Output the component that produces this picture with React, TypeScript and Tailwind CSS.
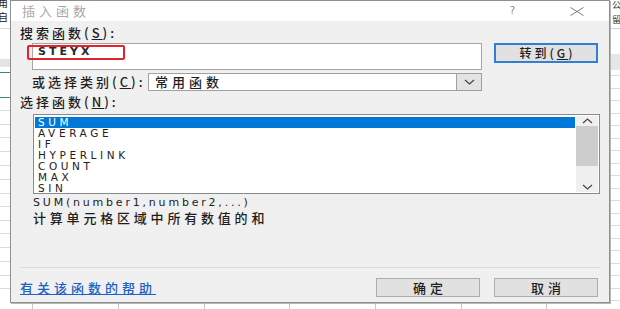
import React from "react";

const FUNCS = ["SUM", "AVERAGE", "IF", "HYPERLINK", "COUNT", "MAX", "SIN"];

function SheetBackdrop() {
  const leftRows = [110, 124, 137, 151, 165, 179, 193, 206, 220, 233, 247, 261, 275, 288];
  const rightRows = [75, 88, 100, 113, 125, 138, 150, 163, 175, 188, 200, 213, 225, 238, 250, 263, 275, 288, 300];
  const ticks = [32, 118, 204, 289, 375, 461, 546];
  return (
    <svg className="absolute inset-0" width="620" height="309" viewBox="0 0 620 309">
      {/* left edge of the sheet */}
      <text x="-2" y="7" fontSize="10" fill="#222" fontFamily="Noto Sans CJK SC, sans-serif">角</text>
      <text x="-2" y="21" fontSize="10" fill="#222" fontFamily="Noto Sans CJK SC, sans-serif">自</text>
      <line x1="0" y1="28.5" x2="12" y2="28.5" stroke="#d6d6d6" />
      <rect x="0" y="59" width="12" height="8" fill="#e4e4e4" />
      <line x1="0" y1="72.5" x2="12" y2="72.5" stroke="#3f8a5e" />
      <line x1="0" y1="97.5" x2="12" y2="97.5" stroke="#3f8a5e" />
      {leftRows.map((y) => (
        <line key={y} x1="0" y1={y + 0.5} x2="12" y2={y + 0.5} stroke="#dadada" />
      ))}
      {/* right edge of the sheet */}
      <text x="612" y="8" fontSize="9" fill="#333" fontFamily="Noto Sans CJK SC, sans-serif">公</text>
      <text x="612" y="23" fontSize="9" fill="#333" fontFamily="Noto Sans CJK SC, sans-serif">留</text>
      <line x1="610" y1="28.5" x2="620" y2="28.5" stroke="#cfcfcf" />
      <rect x="610" y="54" width="10" height="16" fill="#e6e6e6" />
      {rightRows.map((y) => (
        <line key={y} x1="610" y1={y + 0.5} x2="620" y2={y + 0.5} stroke="#dcdcdc" />
      ))}
      {/* bottom edge */}
      {ticks.map((x) => (
        <line key={x} x1={x + 0.5} y1="303" x2={x + 0.5} y2="309" stroke="#c4c4c4" />
      ))}
    </svg>
  );
}

function Chevron({ up = false }: { up?: boolean }) {
  return (
    <svg width="11" height="6" viewBox="0 0 11 6">
      <path
        d={up ? "M1 5 L5.5 1 L10 5" : "M1 1 L5.5 5 L10 1"}
        fill="none"
        stroke="#444"
        strokeWidth="1.2"
      />
    </svg>
  );
}

export default function App() {
  return (
    <div className="relative w-[620px] h-[309px] overflow-hidden bg-white">
      <SheetBackdrop />

      {/* Insert function dialog */}
      <div className="absolute left-[10px] top-0 w-[600px] h-[303px] border border-[#8f8f8f] bg-[#f0f0f0] flex flex-col shadow-[1px_1px_0_#b8b8b8] font-['Noto_Sans_CJK_SC',sans-serif] font-medium text-[#1e1e1e]">
        {/* title bar */}
        <div className="h-[20px] shrink-0 bg-white flex items-center">
          <span className="ml-[11px] text-[13px] leading-[14px] tracking-[4px] font-normal text-[#a8a8a8]">插入函数</span>
          <span className="ml-auto text-[10px] leading-none text-[#8a8a8a] font-['DejaVu_Sans',sans-serif]">?</span>
          <svg className="ml-[55px] mr-[25px]" width="14" height="9" viewBox="0 0 14 9">
            <path d="M0.5 0.5 L13.5 8.5 M13.5 0.5 L0.5 8.5" stroke="#6a6a6a" strokeWidth="0.9" fill="none" />
          </svg>
        </div>

        <div className="flex-1 flex flex-col pl-[9px] pr-[9px]">
          <div className="mt-[5px] h-[14px] text-[13px] leading-[14px] tracking-[3px]">
            搜索函数(<span className="underline">S</span>):
          </div>

          <div className="mt-[3px] flex items-start">
            <div className="relative ml-[12px] w-[450px] h-[27px] bg-white border border-[#a5a5a5]">
              <span className="block pl-[5px] pt-[1px] text-[11px] leading-[14px] tracking-[3px] font-['DejaVu_Sans',sans-serif] font-semibold text-[#2a2a2a]">
                STEYX
              </span>
              <div className="absolute left-[-6px] top-[1px] w-[98px] h-[15px] border-2 border-[#e4222b] rounded-[2px]" />
            </div>
            <button className="ml-[12px] w-[104px] h-[20px] bg-[#e1e1e1] border-2 border-[#2f7fd6] text-[12px] leading-[14px] tracking-[3px] pl-[3px]">
              转到(<span className="underline">G</span>)
            </button>
          </div>

          <div className="mt-[3px] h-[18px] flex items-center">
            <span className="ml-[12px] w-[116px] text-[13px] leading-[14px] tracking-[3px]">
              或选择类别(<span className="underline">C</span>):
            </span>
            <div className="w-[334px] h-[18px] bg-white border border-[#a0a0a0] flex items-center">
              <span className="pl-[6px] text-[13px] leading-[14px] tracking-[4px]">常用函数</span>
              <div className="ml-auto w-[25px] h-full bg-[#e3e3e3] border-l border-[#a0a0a0] flex items-center justify-center">
                <Chevron />
              </div>
            </div>
          </div>

          <div className="mt-[4px] h-[14px] text-[13px] leading-[14px] tracking-[3px]">
            选择函数(<span className="underline">N</span>):
          </div>

          {/* function list */}
          <div className="mt-[5px] ml-[13px] w-[567px] h-[80px] bg-white border border-[#8a8a8a] flex p-[1px]">
            <div className="flex-1 flex flex-col pt-[1px]">
              {FUNCS.map((name, i) => (
                <div
                  key={name}
                  className={
                    i === 0
                      ? "h-[11px] bg-[#0078d7] text-white pl-[3px] text-[10.5px] leading-[11px] tracking-[3.6px] font-['DejaVu_Sans',sans-serif]"
                      : "h-[11px] text-[#222] pl-[3px] text-[10.5px] leading-[11px] tracking-[3.6px] font-['DejaVu_Sans',sans-serif]"
                  }
                >
                  {name}
                </div>
              ))}
            </div>
            <div className="w-[22px] ml-[1px] bg-[#f0f0f0] flex flex-col items-center">
              <div className="h-[10px] flex items-center">
                <Chevron up />
              </div>
              <div className="w-full h-[40px] bg-[#cdcdcd]" />
              <div className="mt-auto h-[10px] flex items-center">
                <Chevron />
              </div>
            </div>
          </div>

          <div className="mt-[2px] ml-[13px] h-[13px] text-[11px] leading-[13px] tracking-[2.8px] font-['DejaVu_Sans','Noto_Sans_CJK_SC',sans-serif]">
            SUM(number1,number2,...)
          </div>
          <div className="mt-[2px] ml-[13px] h-[14px] text-[13px] leading-[14px] tracking-[3.8px]">
            计算单元格区域中所有数值的和
          </div>

          <div className="mt-auto border-t border-[#dcdcdc] pt-[10px] pb-[5px] flex items-center">
            <a className="text-[13px] leading-[14px] tracking-[4px] text-[#2160c4] underline">有关该函数的帮助</a>
            <button className="ml-auto w-[104px] h-[19px] bg-[#e1e1e1] border border-[#adadad] text-[13px] leading-[14px] tracking-[4px] pl-[4px]">
              确定
            </button>
            <button className="ml-[14px] mr-[2px] w-[104px] h-[19px] bg-[#e1e1e1] border border-[#adadad] text-[13px] leading-[14px] tracking-[4px] pl-[4px]">
              取消
            </button>
          </div>
        </div>
      </div>
    </div>
  );
}
